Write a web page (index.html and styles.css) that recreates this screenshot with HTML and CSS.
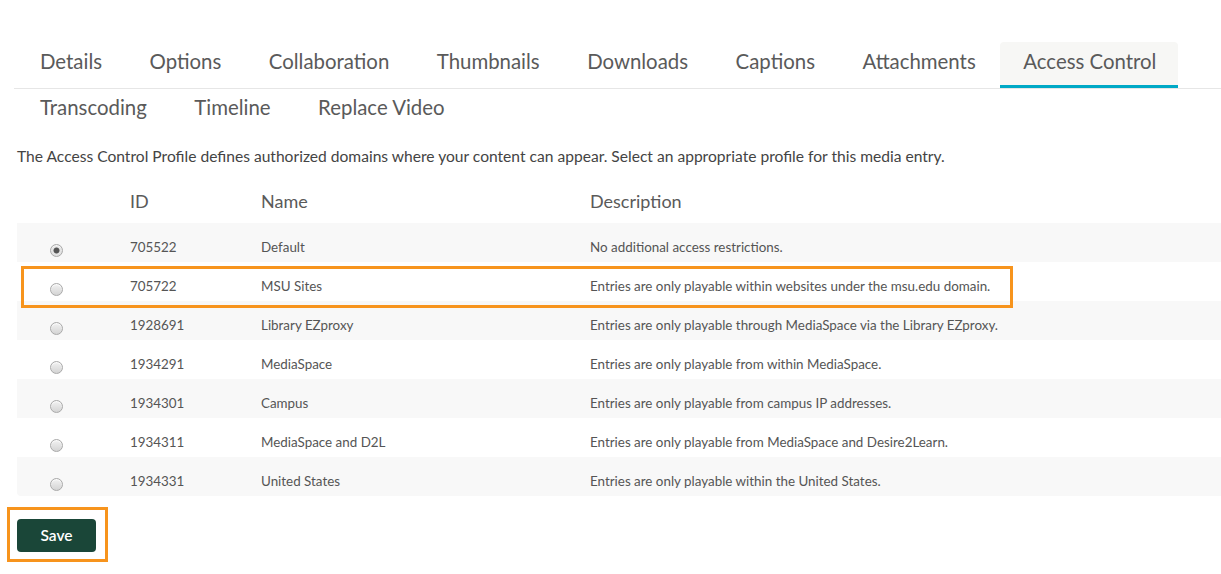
FILE: index.html
```html
<!DOCTYPE html>
<html>
<head>
<meta charset="utf-8">
<link rel="stylesheet" href="styles.css">
</head>
<body>
<div class="page">
  <nav class="tabs">
    <div class="tab-row first">
      <span class="tab">Details</span>
      <span class="tab">Options</span>
      <span class="tab">Collaboration</span>
      <span class="tab">Thumbnails</span>
      <span class="tab">Downloads</span>
      <span class="tab">Captions</span>
      <span class="tab">Attachments</span>
      <span class="tab active">Access Control</span>
    </div>
    <div class="tab-row second">
      <span class="tab">Transcoding</span>
      <span class="tab">Timeline</span>
      <span class="tab">Replace Video</span>
    </div>
  </nav>

  <p class="intro">The Access Control Profile defines authorized domains where your content can appear. Select an appropriate profile for this media entry.</p>

  <div class="profiles">
    <div class="row head">
      <div class="cell"></div>
      <div class="cell">ID</div>
      <div class="cell">Name</div>
      <div class="cell">Description</div>
    </div>
    <div class="row odd">
      <div class="cell radio-cell"><span class="radio checked"></span></div>
      <div class="cell">705522</div>
      <div class="cell">Default</div>
      <div class="cell">No additional access restrictions.</div>
    </div>
    <div class="row even marked">
      <div class="cell radio-cell"><span class="radio"></span></div>
      <div class="cell">705722</div>
      <div class="cell">MSU Sites</div>
      <div class="cell">Entries are only playable within websites under the msu.edu domain.</div>
      <span class="highlight"></span>
    </div>
    <div class="row odd">
      <div class="cell radio-cell"><span class="radio"></span></div>
      <div class="cell">1928691</div>
      <div class="cell">Library EZproxy</div>
      <div class="cell">Entries are only playable through MediaSpace via the Library EZproxy.</div>
    </div>
    <div class="row even">
      <div class="cell radio-cell"><span class="radio"></span></div>
      <div class="cell">1934291</div>
      <div class="cell">MediaSpace</div>
      <div class="cell">Entries are only playable from within MediaSpace.</div>
    </div>
    <div class="row odd">
      <div class="cell radio-cell"><span class="radio"></span></div>
      <div class="cell">1934301</div>
      <div class="cell">Campus</div>
      <div class="cell">Entries are only playable from campus IP addresses.</div>
    </div>
    <div class="row even">
      <div class="cell radio-cell"><span class="radio"></span></div>
      <div class="cell">1934311</div>
      <div class="cell">MediaSpace and D2L</div>
      <div class="cell">Entries are only playable from MediaSpace and Desire2Learn.</div>
    </div>
    <div class="row odd last">
      <div class="cell radio-cell"><span class="radio"></span></div>
      <div class="cell">1934331</div>
      <div class="cell">United States</div>
      <div class="cell">Entries are only playable within the United States.</div>
    </div>
  </div>

  <div class="save-mark">
    <button class="save">Save</button>
  </div>
</div>
</body>
</html>
```

FILE: styles.css
```css
html, body {
  margin: 0;
  padding: 0;
  background: #ffffff;
}

body {
  font-family: Lato, "Open Sans", sans-serif;
  color: #555555;
  overflow: hidden;
}

.page {
  padding: 42px 0 0 17px;
}

.tabs {
  margin-left: -3px;
}

.tab-row {
  display: flex;
  padding-left: 3px;
}

.tab-row.first {
  border-bottom: 1px solid #e6e6e6;
}

.tab {
  display: block;
  font-size: 20.4px;
  line-height: 26px;
  padding: 6px 24px 11px 23px;
  margin-right: 0.5px;
  border-bottom: 3px solid transparent;
  color: #5a5a5a;
  white-space: nowrap;
}

.tab-row.second .tab {
  padding-top: 5px;
  padding-bottom: 10px;
}

.tab.active {
  background: #f7f7f5;
  border-bottom-color: #00a9c6;
  border-radius: 4px 4px 0 0;
  padding-right: 22px;
}

.intro {
  margin: 13px 0 0 0;
  font-size: 15.6px;
  line-height: 21px;
  color: #444444;
}

.profiles {
  margin-top: 12px;
}

.row {
  display: grid;
  grid-template-columns: 113px 131px 329px 1fr;
  height: 39px;
  font-size: 13.4px;
  line-height: 20px;
  color: #555555;
}

.row .cell {
  padding-top: 14px;
  white-space: nowrap;
}

.row.head {
  height: 44px;
  font-size: 18px;
  line-height: 24px;
  color: #5a5a5a;
}

.row.head .cell {
  padding-top: 10px;
}

.row.odd {
  background: #f8f8f8;
}

.row.last {
  border-radius: 0 0 0 4px;
}

.row.marked {
  position: relative;
}

.highlight {
  position: absolute;
  left: 4px;
  top: 4px;
  width: 986px;
  height: 36px;
  border: 3px solid #f7941d;
  pointer-events: none;
}

.row .radio-cell {
  padding-top: 21px;
  padding-left: 33px;
}

.radio {
  display: block;
  width: 11px;
  height: 11px;
  border-radius: 50%;
  border: 1px solid #a9a9a9;
  background: linear-gradient(#f2f2f2, #d4d4d4);
  box-shadow: inset 0 1px 1px rgba(255,255,255,0.8);
}

.radio.checked {
  background: radial-gradient(circle, #555555 0, #555555 2.6px, #e6e6e6 3.4px, #d8d8d8 100%);
}

.save-mark {
  display: inline-block;
  margin: 11px 0 0 -10px;
  border: 3px solid #f7941d;
  padding: 9px 9px 7px 7px;
}

.save {
  display: block;
  width: 79px;
  height: 33px;
  border: none;
  border-radius: 4px;
  background: #1a4638;
  color: #ffffff;
  font-family: Lato, "Open Sans", sans-serif;
  font-size: 15.5px;
  font-weight: 600;
  padding: 0 0 2px 0;
  cursor: pointer;
}
```
